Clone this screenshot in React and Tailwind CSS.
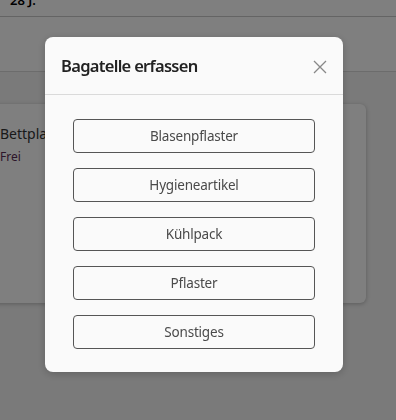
import React from 'react';

const items = ['Blasenpflaster', 'Hygieneartikel', 'Kühlpack', 'Pflaster', 'Sonstiges'];

const App = () => {
  return (
    <div className="relative h-[420px] w-[396px] overflow-hidden bg-[#f4f4f4] font-['Noto_Sans',sans-serif]">
      {/* page behind the dialog */}
      <div className="h-[17px] overflow-hidden border-b border-[#c8c8c8] bg-white">
        <div className="-mt-[9px] pl-[10px] text-[13px] font-semibold text-black">28 J.</div>
      </div>
      <div className="h-[55px] border-b border-[#d8d8d8] bg-white"></div>
      <div className="pt-[32px]">
        <div className="-ml-[16px] h-[199px] w-[382px] rounded-md bg-white px-[16px] pt-[19px] shadow-[0_1px_4px_rgba(0,0,0,0.25)]">
          <div className="text-[14px] text-[#333]">Bettplatz 4</div>
          <div className="mt-[4px] text-[12px] text-[#5a2d55]">Frei</div>
        </div>
      </div>

      {/* overlay */}
      <div className="fixed inset-0 bg-black/50 pl-[45px] pt-[37px]">
        <div className="w-[298px] overflow-hidden rounded-lg bg-[#fafafa] shadow-[0_2px_8px_rgba(0,0,0,0.2)]">
          <div className="flex h-[58px] items-center justify-between border-b border-[#dadada] pl-[16px] pr-[16px] pt-[2px]">
            <h2 className="text-[16.5px] font-semibold tracking-[-0.7px] text-[#222]">Bagatelle erfassen</h2>
            <svg width="14" height="14" viewBox="0 0 14 14" className="text-[#888]">
              <path d="M1 1 L13 13 M13 1 L1 13" stroke="currentColor" strokeWidth="1.3" fill="none" />
            </svg>
          </div>
          <div className="flex flex-col gap-[15px] px-[28px] pb-[23px] pt-[24px]">
            {items.map((item) => (
              <button
                key={item}
                className="h-[34px] w-full rounded-[4px] border border-[#555] bg-[#fafafa] text-[13.5px] tracking-[-0.2px] text-[#4a4a4a]"
              >
                {item}
              </button>
            ))}
          </div>
        </div>
      </div>
    </div>
  );
};

export default App;
